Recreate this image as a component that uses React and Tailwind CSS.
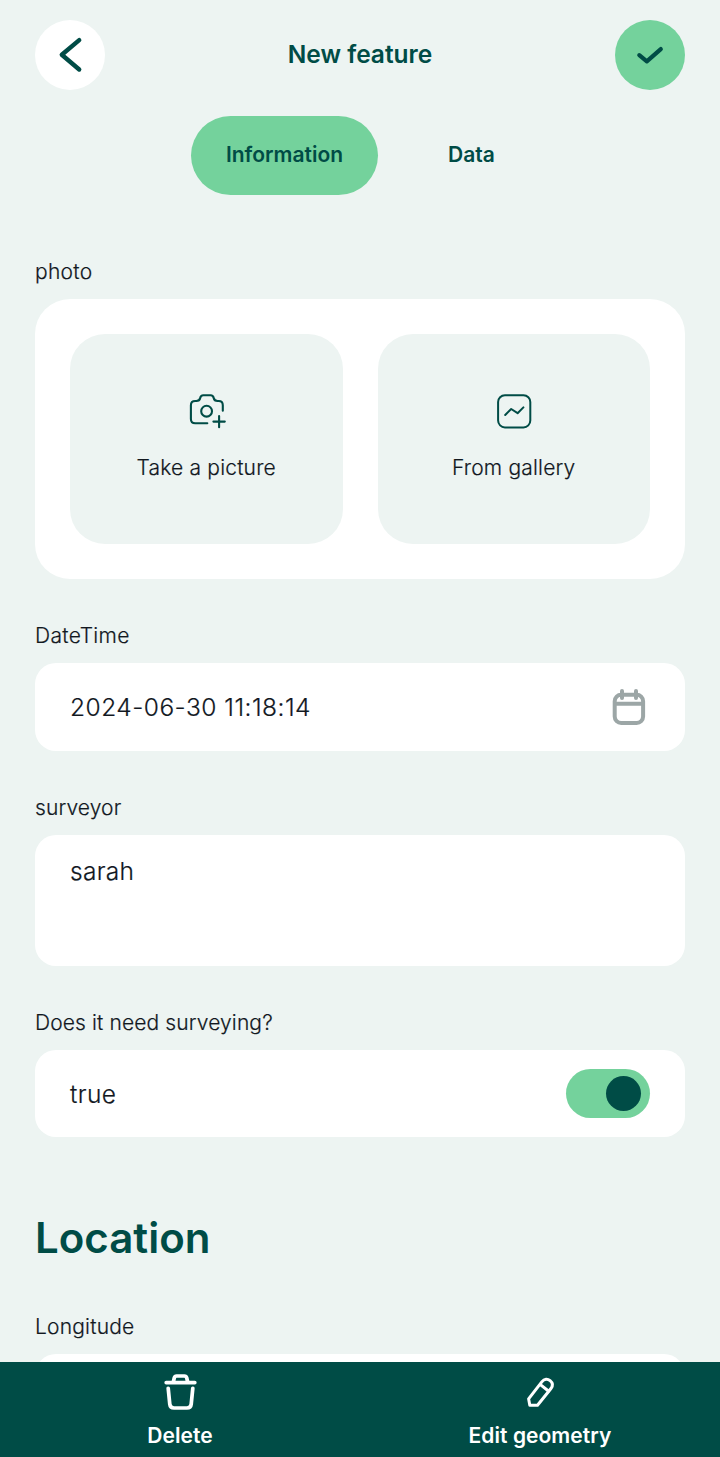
import React from "react";

function Icon({ viewBox, className, width, children }) {
  return (
    <svg
      viewBox={viewBox}
      className={className}
      fill="none"
      stroke="currentColor"
      strokeWidth={width}
      strokeLinecap="round"
      strokeLinejoin="round"
      aria-hidden="true"
    >
      {children}
    </svg>
  );
}

function BackIcon() {
  return (
    <Icon viewBox="35 19.5 70 70" width="4.4" className="size-[70px]">
      <path d="M79.2 39.6 61.8 54.3 79.2 69" />
    </Icon>
  );
}

function CheckIcon() {
  return (
    <Icon viewBox="615 19.5 70 70" width="4.2" className="size-[70px]">
      <path d="M639.3 54.6 646.8 60.8 660.8 48.6" />
    </Icon>
  );
}

function CameraIcon() {
  return (
    <Icon viewBox="185 390 42 42" width="2.1" className="size-[42px]">
      <path d="M207.3 423.3H195.2Q190.9 423.3 190.9 419V405.3Q190.9 401 195.2 401H196.3Q199.6 401 200.2 398Q200.7 395.2 203.3 395.2H210.6Q213.2 395.2 213.7 398Q214.3 401 217.6 401H218.7Q222.8 401 222.8 405.3V410.8" />
      <circle cx="206.6" cy="411.2" r="5.4" />
      <path d="M213.4 421.6H224.8M219.1 416V427.2" />
    </Icon>
  );
}

function GalleryIcon() {
  return (
    <Icon viewBox="493 390 42 42" width="2" className="size-[42px]">
      <rect x="498.1" y="395.2" width="32.2" height="32.2" rx="6.8" />
      <path d="M505.2 415 511.2 409 517.6 413.2 523.4 407.4" />
    </Icon>
  );
}

function CalendarIcon() {
  return (
    <Icon viewBox="608 686 42 42" width="4" className="size-[42px] text-[#9ca6a6]">
      <rect x="614.7" y="694.8" width="28.4" height="28.2" rx="6.5" />
      <path d="M615 703.7H643M622 691V698M636 691V698" />
    </Icon>
  );
}

function TrashIcon() {
  return (
    <Icon viewBox="159 1371 42 42" width="3.7" className="size-[42px]">
      <path d="M166.2 1382.6H194.8M173.3 1382 174.3 1377.8Q174.8 1376 176.6 1376H184.4Q186.2 1376 186.7 1377.8L187.7 1382" />
      <path d="M168.2 1388.3 169.8 1404.3Q170.2 1408 174 1408H187Q190.8 1408 191.2 1404.3L192.8 1388.3" />
    </Icon>
  );
}

function PencilIcon() {
  return (
    <Icon viewBox="519 1371 42 42" width="3" className="size-[42px]">
      <path d="M528.6 1398.8 541.8 1381.8C544.4 1378.5 547.6 1378.5 550.1 1380.6C552.9 1382.9 553 1386 550.8 1388.8L537.5 1405.2H529.8Z" />
      <path d="M540.4 1384.6 548.4 1391" />
    </Icon>
  );
}

function Field({ label, labelClass = "tracking-[0.12px]", className, children }) {
  return (
    <section className={className}>
      <div className={`h-7 text-[21px] leading-[30px] ${labelClass}`}>{label}</div>
      {children}
    </section>
  );
}

function PhotoButton({ icon, children }) {
  return (
    <button className="flex h-[210px] flex-1 flex-col items-center rounded-[35px] bg-[#edf4f2] pt-14 text-[21px]">
      <span className="text-[#004c46]">{icon}</span>
      <span className="mt-[21px] leading-[30px] tracking-[0.18px]">{children}</span>
    </button>
  );
}

function FooterButton({ icon, children }) {
  return (
    <button className="flex flex-1 flex-col items-center pt-[9px] text-[21px] font-semibold text-white">
      {icon}
      <span className="mt-2 leading-[30px] tracking-[0.05px]">{children}</span>
    </button>
  );
}

export default function App() {
  return (
    <div className="flex h-[1457px] w-[720px] flex-col overflow-hidden bg-[#edf4f2] font-['Inter',sans-serif] font-light text-[#12181f]">
      <main className="min-h-0 flex-1 overflow-hidden px-[35px] pt-[19.5px] [-webkit-text-stroke:0.2px]">
        <header className="flex h-[70px] items-center justify-between text-[#004c46] [-webkit-text-stroke:0px]">
          <button className="size-[70px] rounded-full bg-white" aria-label="Back">
            <BackIcon />
          </button>
          <h1 className="pb-px text-[24.5px] font-semibold">New feature</h1>
          <button className="size-[70px] rounded-full bg-[#74d29c]" aria-label="Save">
            <CheckIcon />
          </button>
        </header>

        <nav className="mt-[26px] flex h-[79px] justify-center gap-[35px] text-[21px] font-semibold text-[#004c46] [-webkit-text-stroke:0px]">
          <button className="w-[187px] rounded-full bg-[#74d29c] pl-px">Information</button>
          <button className="w-[117px] pl-px">Data</button>
        </nav>

        <Field label="photo" labelClass="tracking-[0.3px]" className="mt-[62.5px]">
          <div className="mt-[14px] flex h-[280px] gap-[35px] rounded-[35px] bg-white p-[35px]">
            <PhotoButton icon={<CameraIcon />}>Take a picture</PhotoButton>
            <PhotoButton icon={<GalleryIcon />}>From gallery</PhotoButton>
          </div>
        </Field>

        <Field label="DateTime" labelClass="tracking-[0.35px]" className="mt-[42px]">
          <div className="mt-[14px] flex h-[88px] items-center justify-between rounded-[21px] bg-white px-[35px] text-[24.5px]">
            <span className="tracking-[0.49px]">2024-06-30 11:18:14</span>
            <CalendarIcon />
          </div>
        </Field>

        <Field label="surveyor" className="mt-[42px]">
          <div className="mt-[14px] h-[131px] rounded-[21px] bg-white px-[35px] pt-5 text-[24.5px] leading-8 tracking-[0.3px]">
            sarah
          </div>
        </Field>

        <Field label="Does it need surveying?" className="mt-[42px]">
          <div className="mt-[14px] flex h-[87px] items-center justify-between rounded-[21px] bg-white px-[35px] text-[24.5px]">
            <span className="pt-px tracking-[0.4px]">true</span>
            <button
              role="switch"
              aria-checked="true"
              aria-label="Needs surveying"
              className="flex h-[49px] w-[84px] items-center justify-end rounded-full bg-[#74d29c] pr-[9px]"
            >
              <span className="size-[35px] rounded-full bg-[#004c46]" />
            </button>
          </div>
        </Field>

        <h2 className="mt-[75px] h-[52px] text-[42px] leading-[52px] font-semibold text-[#004c46] [-webkit-text-stroke:0px]">
          Location
        </h2>

        <Field label="Longitude" labelClass="tracking-[0.2px]" className="mt-[48px]">
          <div className="mt-[14px] h-[88px] rounded-[21px] bg-white" />
        </Field>
      </main>

      <footer className="flex h-[95px] shrink-0 bg-[#004c46]">
        <FooterButton icon={<TrashIcon />}>Delete</FooterButton>
        <FooterButton icon={<PencilIcon />}>Edit geometry</FooterButton>
      </footer>
    </div>
  );
}
